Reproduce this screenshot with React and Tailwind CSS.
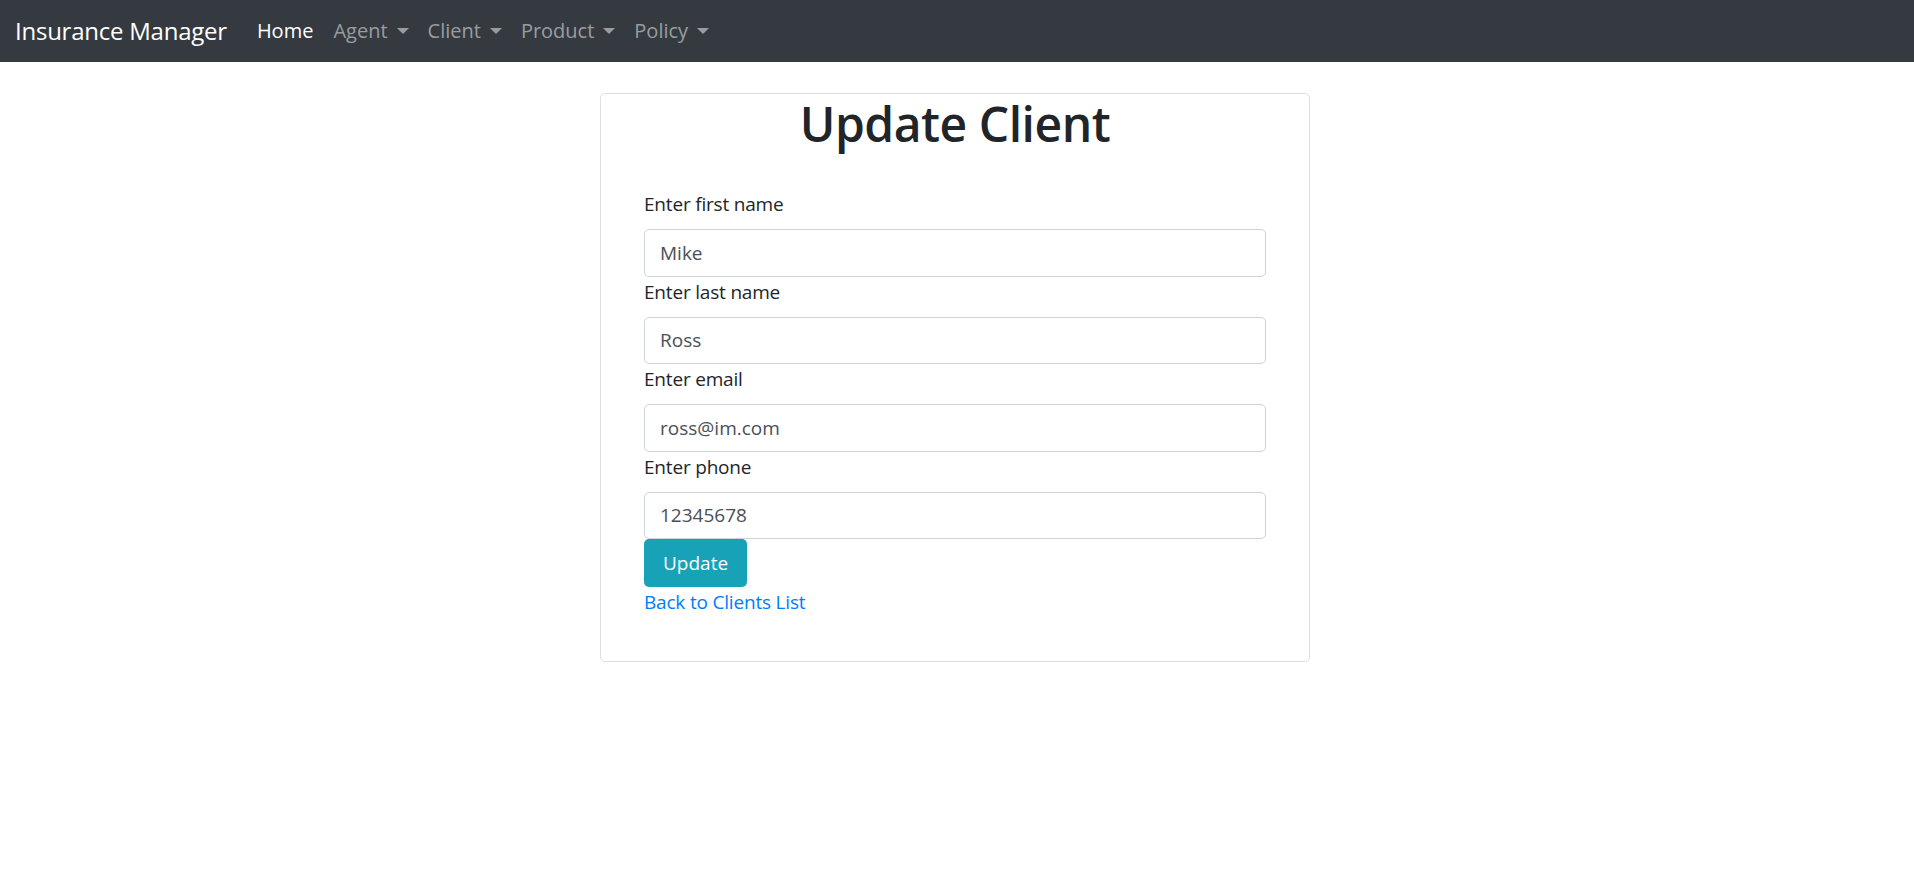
import React, { useState } from "react";

const font = { fontFamily: '"Open Sans", "Noto Sans", sans-serif' };

const navItems = [
  { label: "Agent" },
  { label: "Client" },
  { label: "Product" },
  { label: "Policy" },
];

const Caret = () => (
  <span className="inline-block ml-[9px] align-[4px] w-0 h-0 border-l-[6px] border-r-[6px] border-t-[6px] border-l-transparent border-r-transparent border-t-current" />
);

const Navbar = () => (
  <nav className="h-[62px] bg-[#343a40] flex items-center px-[15px]">
    <a href="#" className="text-[24px] leading-[30px] text-white mr-[20px] tracking-[-0.01em]">
      Insurance Manager
    </a>
    <ul className="flex items-center">
      <li>
        <a href="#" className="block px-[10px] text-[20px] leading-[30px] text-white">
          Home
        </a>
      </li>
      {navItems.map((item) => (
        <li key={item.label}>
          <a href="#" className="block pl-[10px] pr-[9px] text-[20px] leading-[30px] text-[#9a9da0]">
            {item.label}
            <Caret />
          </a>
        </li>
      ))}
    </ul>
  </nav>
);

const Field = ({ label, name, value, onChange }) => (
  <div>
    <label className="block text-[19px] leading-[30px] text-[#212529] mb-[10px] tracking-[-0.01em]">{label}</label>
    <input
      type="text"
      name={name}
      value={value}
      onChange={onChange}
      className="block w-full h-[47.5px] px-[15px] text-[19px] text-[#495057] bg-white border border-[#ced4da] rounded-[5px] outline-none"
    />
  </div>
);

export default function App() {
  const [formData, setFormData] = useState({
    firstName: "Mike",
    lastName: "Ross",
    email: "ross@im.com",
    phone: "12345678",
  });

  const handleChange = (e) => {
    setFormData({ ...formData, [e.target.name]: e.target.value });
  };

  return (
    <div style={font} className="min-h-screen bg-white">
      <Navbar />
      <div className="flex justify-center pr-[4px] pt-[31px]">
        <div className="w-[710px] border border-[rgba(0,0,0,0.125)] rounded-[5px] pb-[44px]">
          <h1 className="text-center text-[48px] leading-[60px] font-semibold text-[#212529] tracking-[-0.01em]">Update Client</h1>

          <form onSubmit={(e) => e.preventDefault()} className="px-[43px] mt-[35px]">
            <Field label="Enter first name" name="firstName" value={formData.firstName} onChange={handleChange} />
            <Field label="Enter last name" name="lastName" value={formData.lastName} onChange={handleChange} />
            <Field label="Enter email" name="email" value={formData.email} onChange={handleChange} />
            <Field label="Enter phone" name="phone" value={formData.phone} onChange={handleChange} />
            <button
              type="submit"
              className="block h-[47.5px] px-[19px] text-[19px] text-white bg-[#17a2b8] rounded-[5px]"
            >
              Update
            </button>
            <a href="#" className="block w-fit text-[19px] leading-[30px] text-[#007bff] tracking-[-0.01em]">
              Back to Clients List
            </a>
          </form>
        </div>
      </div>
    </div>
  );
}
